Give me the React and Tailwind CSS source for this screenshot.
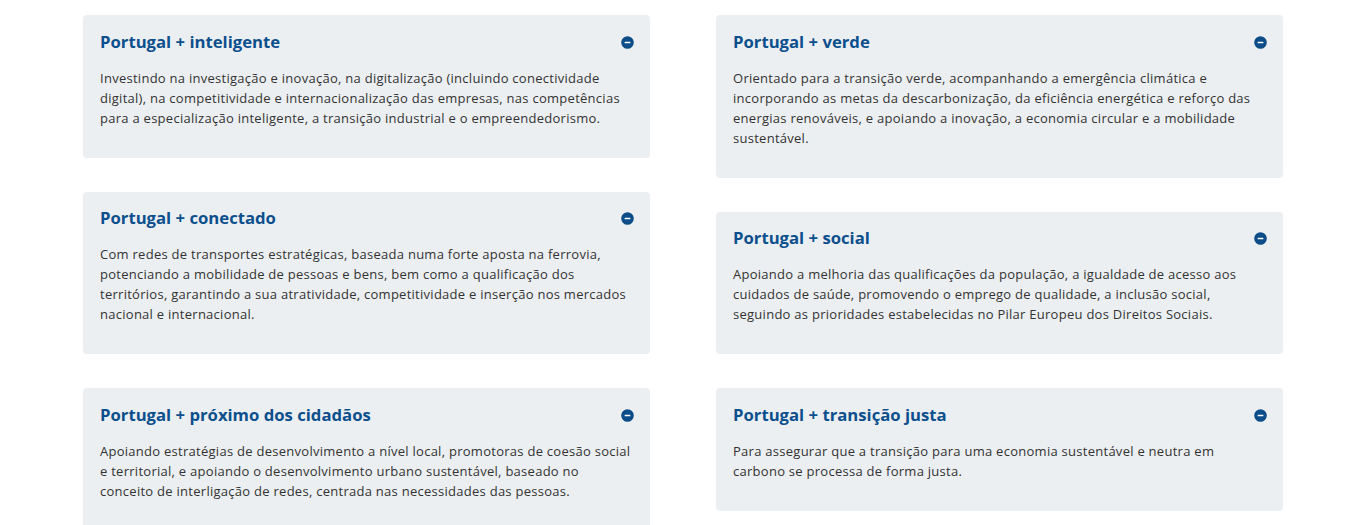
import React from "react";

const left = [
  {
    t: "Portugal + inteligente",
    d: "Investindo na investigação e inovação, na digitalização (incluindo conectividade digital), na competitividade e internacionalização das empresas, nas competências para a especialização inteligente, a transição industrial e o empreendedorismo.",
  },
  {
    t: "Portugal + conectado",
    d: "Com redes de transportes estratégicas, baseada numa forte aposta na ferrovia, potenciando a mobilidade de pessoas e bens, bem como a qualificação dos territórios, garantindo a sua atratividade, competitividade e inserção nos mercados nacional e internacional.",
  },
  {
    t: "Portugal + próximo dos cidadãos",
    d: "Apoiando estratégias de desenvolvimento a nível local, promotoras de coesão social e territorial, e apoiando o desenvolvimento urbano sustentável, baseado no conceito de interligação de redes, centrada nas necessidades das pessoas.",
  },
];

const right = [
  {
    t: "Portugal + verde",
    d: "Orientado para a transição verde, acompanhando a emergência climática e incorporando as metas da descarbonização, da eficiência energética e reforço das energias renováveis, e apoiando a inovação, a economia circular e a mobilidade sustentável.",
  },
  {
    t: "Portugal + social",
    d: "Apoiando a melhoria das qualificações da população, a igualdade de acesso aos cuidados de saúde, promovendo o emprego de qualidade, a inclusão social, seguindo as prioridades estabelecidas no Pilar Europeu dos Direitos Sociais.",
  },
  {
    t: "Portugal + transição justa",
    d: "Para assegurar que a transição para uma economia sustentável e neutra em carbono se processa de forma justa.",
  },
];

function Minus() {
  return (
    <svg width="13" height="13" viewBox="0 0 13 13" className="shrink-0">
      <circle cx="6.5" cy="6.5" r="6.3" fill="#0c4c88" />
      <rect x="3.6" y="5.8" width="5.8" height="1.4" rx="0.5" fill="#ffffff" />
    </svg>
  );
}

function Card({ t, d }) {
  return (
    <div className="bg-[#eceff2] rounded-[4px] pl-[17px] pr-[17px] pt-[16.5px] pb-[30px]">
      <div className="flex items-center justify-between h-[20px]">
        <h3 className="text-[16.7px] leading-[20px] font-bold text-[#0c4f8d]">{t}</h3>
        <div className="mr-[-1px] mt-[1px]">
          <Minus />
        </div>
      </div>
      <p className="mt-[16px] text-[13px] leading-[20px] text-[#333333] tracking-[0.27px]">{d}</p>
    </div>
  );
}

export default function App() {
  return (
    <div
      className="w-[1345px] h-[525px] overflow-hidden bg-white pl-[83px] pt-[15px] flex gap-[66px] items-start"
      style={{ fontFamily: '"Open Sans", "Noto Sans", sans-serif' }}
    >
      <div className="w-[567px] flex flex-col gap-[34px]">
        {left.map((c) => (
          <Card key={c.t} {...c} />
        ))}
      </div>
      <div className="w-[567px] flex flex-col gap-[34px]">
        {right.map((c) => (
          <Card key={c.t} {...c} />
        ))}
      </div>
    </div>
  );
}
